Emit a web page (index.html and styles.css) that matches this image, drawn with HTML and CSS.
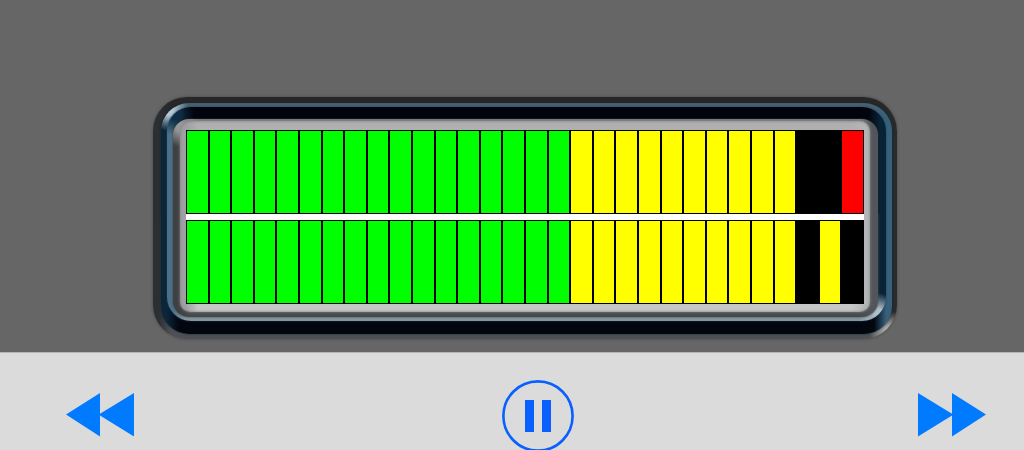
FILE: index.html
```html
<!DOCTYPE html>
<html lang="en">
<head>
<meta charset="utf-8">
<meta name="viewport" content="width=device-width, initial-scale=1">
<title>Level Meter</title>
<link rel="stylesheet" href="styles.css">
</head>
<body>

<main class="stage">
  <div class="ring outer">
    <div class="ring rim">
      <div class="ring groove">
        <div class="ring edge">
          <div class="ring silver">
            <div class="meters">
              <div class="channel" id="left" role="img" aria-label="Left channel level"></div>
              <div class="channel" id="right" role="img" aria-label="Right channel level"></div>
            </div>
          </div>
        </div>
      </div>
    </div>
  </div>
</main>

<footer class="controls">
  <button type="button" class="rewind" aria-label="Rewind">
    <svg width="68" height="44" viewBox="0 0 68 44"><path d="M0 21.500L34 0V20.700L68 0V43.500L34 22.600V43.500Z"/></svg>
  </button>
  <button type="button" class="pause" aria-label="Pause">
    <svg width="72" height="72" viewBox="0 0 72 72">
      <circle cx="36" cy="36" r="34.6"/>
      <path d="M23 20h9v32h-9zM40 20h9v32h-9z"/>
    </svg>
  </button>
  <button type="button" class="forward" aria-label="Fast forward">
    <svg width="68" height="44" viewBox="0 0 68 44"><path d="M0 0L34 20.700V0L68 21.500L34 43.500V22.600L0 43.500Z"/></svg>
  </button>
</footer>

<script>
var SEGMENTS = 30;
var GREEN = 17;

// level = lit segments, peak = index of the held peak segment
function drawChannel(id, level, peak) {
	var channel = document.getElementById(id);
	for (var i = 0; i < SEGMENTS; i++) {
		var seg = document.createElement('span');
		if (i < level || i == peak) {
			seg.className = i < GREEN ? 'green' : (i < SEGMENTS - 1 ? 'yellow' : 'red');
		}
		channel.appendChild(seg);
	}
}

drawChannel('left', 27, 29);
drawChannel('right', 27, 28);
</script>

</body>
</html>
```
FILE: styles.css
```css
* {
    box-sizing: border-box;
}

body {
    display: flex;
    flex-direction: column;
    height: 100vh;
    margin: 0;
    overflow: hidden;
    background-color: #666;
    font-family: "Liberation Sans", Arial, sans-serif;
}

.stage {
    flex: 1;
    padding: 97px 127px 13px 153px;
}

/* Meter frame, from the outside in. The side colours fade into
   the top and bottom ones round the corners, and --glint-* light
   up the top left and bottom right corners. */
.ring {
    --glint-tl: transparent;
    --glint-br: transparent;
    background:
        radial-gradient(circle at 8px 8px, var(--glint-tl) 4px, transparent 20px),
        radial-gradient(circle at calc(100% - 8px) calc(100% - 8px), var(--glint-br) 4px, transparent 20px),
        linear-gradient(90deg, var(--left) 6px, transparent 18px, transparent calc(100% - 18px), var(--right) calc(100% - 6px)),
        linear-gradient(var(--top) 50%, var(--bottom) 50%);
}

.outer {
    --top: #272727;
    --right: #292a2b;
    --bottom: #4d5054;
    --left: #2b2e32;
    --glint-br: #aaa;
    padding: 6px 5px 5px 8px;
    border-radius: 34px;
    box-shadow: 0 0 3px #444;
}

.rim {
    --top: #466070;
    --right: #37607a;
    --bottom: #02060f;
    --left: #0c2538;
    --glint-tl: #b4c8d4;
    padding: 4px 6px 13px 6px;
    border-radius: 28px;
    box-shadow: 0 0 2px #0c2538;
}

.groove {
    --top: #01030d;
    --right: #082336;
    --bottom: #8396a0;
    --left: #4b7189;
    --glint-tl: #0b2c44;
    --glint-br: #b0c0ca;
    padding: 12px 8px 4px 6px;
    border-radius: 24px;
    box-shadow: 0 0 2px #1f4258;
}

.edge {
    --top: #777;
    --right: #52565a;
    --bottom: #48494a;
    --left: #3e4043;
    --glint-tl: #999;
    padding: 2px 8px 5px 7px;
    border-radius: 16px;
    box-shadow: 0 0 2px #333;
}

.silver {
    --top: #b0b0b3;
    --right: #b4b5b6;
    --bottom: #c6c7c7;
    --left: #a0a0a4;
    padding: 9px 6px 8px 6px;
    border-radius: 10px;
    box-shadow: inset 0 0 3px #777, 0 0 3px #888;
}

.meters {
    display: grid;
    gap: 6px;
    background-color: #fff;
}

.channel {
    display: grid;
    grid-template-columns: repeat(30, 1fr);
    gap: 2px;
    height: 84px;
    padding: 1px;
    background-color: #000;
}

.green {
    background-color: #0f0;
}

.yellow {
    background-color: #ff0;
}

.red {
    background-color: #f00;
}

/* Playback controls */
.controls {
    display: grid;
    grid-template-columns: 18fr auto 17fr;
    align-items: start;
    height: 98px;
    padding: 27px 38px 0 66px;
    border-top: 1px solid #b5b5b5;
    background-color: #dbdbdb;
}

button {
    padding: 0;
    border: none;
    background: none;
    cursor: pointer;
}

button svg {
    display: block;
}

.rewind, .forward {
    margin-top: 13px;
    fill: #007aff;
}

.rewind {
    justify-self: start;
}

.forward {
    justify-self: end;
}

.pause {
    fill: #0a60ff;
}

.pause circle {
    fill: none;
    stroke: #0a60ff;
    stroke-width: 2.6;
}
```
